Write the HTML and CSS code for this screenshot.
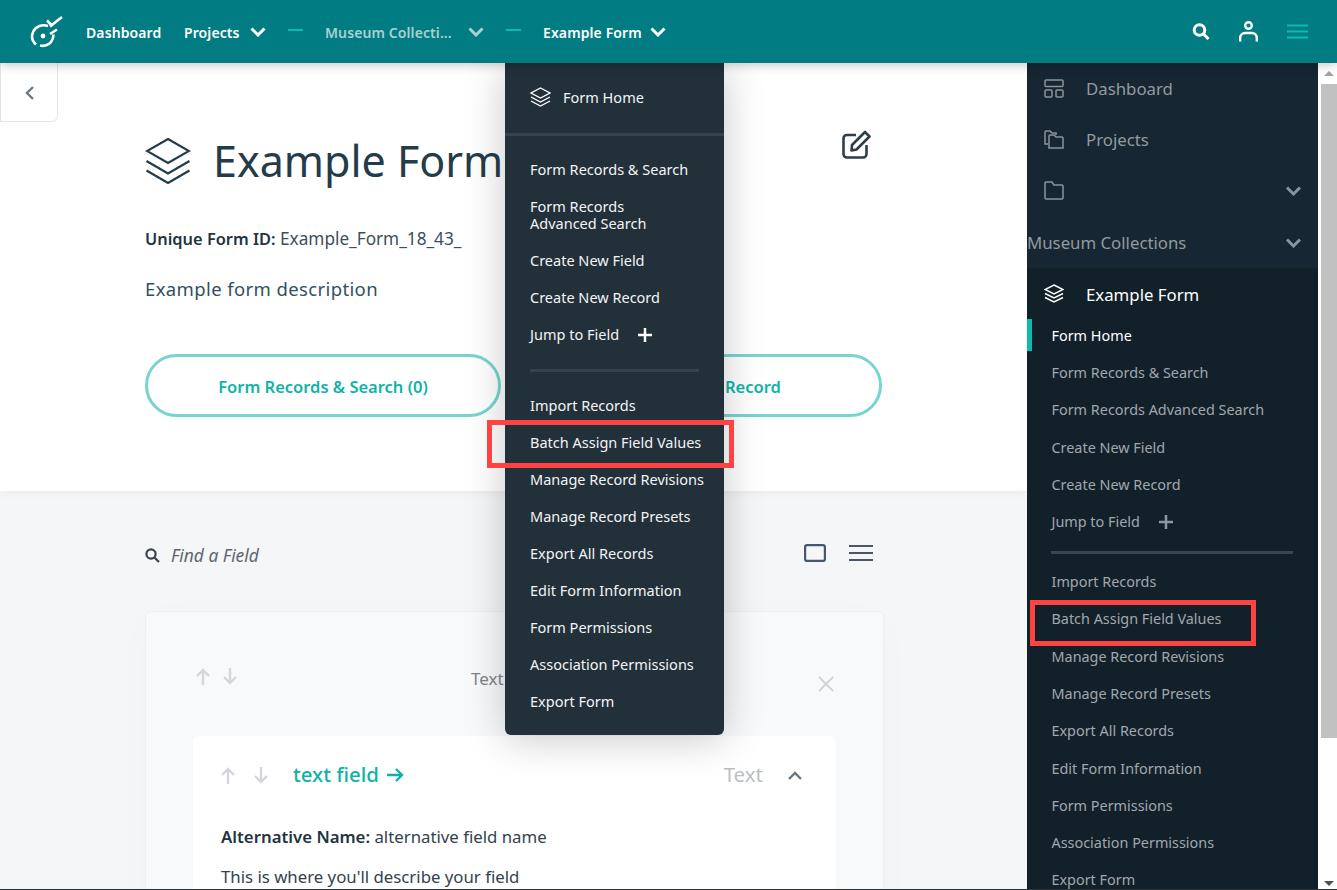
FILE: index.html
```html
<!doctype html>
<html lang="en">
<head>
	<meta charset="UTF-8" />
	<title>Example Form</title>
	<link rel="stylesheet" href="styles.css">
</head>
<body>
<div class="page">

<div class="topbar">
	<svg class="logo" width="34" height="32" viewBox="0 0 34 32" fill="none" stroke="#fff" stroke-width="2.6">
		<path d="M6 28.500 C2 25 1 20 3.500 15 C6 10.500 12 8 18 10"/>
		<path d="M10 29.500 C17 31 23 27 23.500 18.500"/>
		<path d="M17 4.500 L22.500 10"/>
		<path d="M20 10.500 L32 1"/>
		<path d="M20 18 L27 13.500"/>
		<circle cx="13" cy="20" r="2.400" fill="#fff" stroke="none"/>
	</svg>
	<a class="nav-link dash-link">Dashboard</a>
	<a class="nav-link projects-link">Projects</a>
	<svg class="chev" width="16" height="10" viewBox="0 0 16 10" fill="none" stroke="#fff" stroke-width="3"><path d="M1.500 1.500 L8 8 L14.500 1.500"/></svg>
	<span class="dash-sep"></span>
	<a class="nav-link muted museum-link">Museum Collecti...</a>
	<svg class="chev chev-muted" width="16" height="10" viewBox="0 0 16 10" fill="none" stroke="#a9d0d2" stroke-width="3"><path d="M1.500 1.500 L8 8 L14.500 1.500"/></svg>
	<span class="dash-sep"></span>
	<a class="nav-link form-link">Example Form</a>
	<svg class="chev" width="16" height="10" viewBox="0 0 16 10" fill="none" stroke="#fff" stroke-width="3"><path d="M1.500 1.500 L8 8 L14.500 1.500"/></svg>
	<div class="top-right">
		<svg width="18" height="17" viewBox="0 0 18 17" fill="none" stroke="#fff" stroke-width="3"><circle cx="7.500" cy="7" r="5.300"/><path d="M11.500 11 L16.500 16"/></svg>
		<svg width="19" height="21" viewBox="0 0 19 21" fill="none" stroke="#fff" stroke-width="2.400"><circle cx="9.500" cy="4.500" r="3.300"/><path d="M1.200 20.500 V17 C1.200 14 3.500 12 6 12 H13 C15.500 12 17.800 14 17.800 17 V20.500"/></svg>
		<svg width="21" height="15" viewBox="0 0 21 15" fill="none" stroke="#0dbcaf" stroke-width="2"><path d="M0 1.500 H21 M0 7.500 H21 M0 13.500 H21"/></svg>
	</div>
</div>

<div class="main">
	<div class="content">
		<div class="form-head">
			<div class="title-row">
				<div class="title">
					<svg width="46" height="48" viewBox="0 0 46 48" fill="none" stroke="#243c49" stroke-width="2.200"><path d="M23 2 L44 14 L23 26 L2 14 Z"/><path d="M1.500 24 L23 36.500 L44.500 24"/><path d="M1.500 33.500 L23 46 L44.500 33.500"/></svg>
					<h1>Example Form</h1>
				</div>
				<svg class="edit-icon" width="29" height="29" viewBox="0 0 29 29" fill="none" stroke="#2c3e4a" stroke-width="2.600" stroke-linejoin="round"><path d="M14 5 H5 C3 5 1.500 6.500 1.500 8.500 V24 C1.500 26 3 27.500 5 27.500 H21 C23 27.500 24.500 26 24.500 24 V15"/><path d="M10 15 L23 2 L27.500 6.500 L14.500 19.500 L9.500 20.500 Z"/></svg>
			</div>
			<p class="unique-id"><b>Unique Form ID:</b> Example_Form_18_43_</p>
			<p class="description">Example form description</p>
			<div class="big-buttons">
				<a class="big-btn">Form Records &amp; Search (0)</a>
				<a class="big-btn">Create New Record</a>
			</div>
		</div>

		<div class="form-body">
			<div class="toolbar">
				<div class="find">
					<svg width="15" height="15" viewBox="0 0 15 15" fill="none" stroke="#3c444b" stroke-width="2.200"><circle cx="6" cy="6" r="4.600"/><path d="M9.500 9.500 L14 14"/></svg>
					<span>Find a Field</span>
				</div>
				<div class="view-icons">
					<svg width="22" height="18" viewBox="0 0 22 18" fill="none" stroke="#46586a" stroke-width="2.200"><rect x="1.100" y="1.100" width="19.800" height="15.800" rx="2"/></svg>
					<svg width="24" height="18" viewBox="0 0 24 18" fill="none" stroke="#46586a" stroke-width="2"><path d="M0 2 H24 M0 9 H24 M0 16 H24"/></svg>
				</div>
			</div>

			<div class="group-card">
				<div class="group-head">
					<div class="arrows group-arrows">
						<svg width="14" height="17" viewBox="0 0 14 17" fill="none" stroke="#d3d7db" stroke-width="2.400"><path d="M7 17 V2 M1 8 L7 2 L13 8"/></svg>
						<svg width="14" height="17" viewBox="0 0 14 17" fill="none" stroke="#d3d7db" stroke-width="2.400"><path d="M7 0 V15 M1 9 L7 15 L13 9"/></svg>
					</div>
					<span class="group-label">Text</span>
					<svg class="group-x" width="16" height="16" viewBox="0 0 16 16" fill="none" stroke="#cfd3d7" stroke-width="1.800"><path d="M1 1 L15 15 M15 1 L1 15"/></svg>
				</div>
				<div class="field-card">
					<div class="field-head">
						<div class="arrows field-arrows">
							<svg width="14" height="17" viewBox="0 0 14 17" fill="none" stroke="#d3d7db" stroke-width="2.400"><path d="M7 17 V2 M1 8 L7 2 L13 8"/></svg>
							<svg width="14" height="17" viewBox="0 0 14 17" fill="none" stroke="#d3d7db" stroke-width="2.400"><path d="M7 0 V15 M1 9 L7 15 L13 9"/></svg>
						</div>
						<a class="field-name">text field</a>
						<svg width="17" height="14" viewBox="0 0 17 14" fill="none" stroke="#0db3a8" stroke-width="2.400"><path d="M0 7 H15 M9 1 L15 7 L9 13"/></svg>
						<span class="field-type">Text</span>
						<svg class="field-toggle" width="14" height="9" viewBox="0 0 14 9" fill="none" stroke="#6b7780" stroke-width="2.400"><path d="M1 8 L7 2 L13 8"/></svg>
					</div>
					<p class="field-line"><b>Alternative Name:</b> alternative field name</p>
					<p class="field-line">This is where you'll describe your field</p>
				</div>
			</div>
		</div>
	</div>

	<div class="sidenav">
		<div class="side-top">
			<div class="side-row">
				<svg class="side-icon" width="20" height="19" viewBox="0 0 20 19" fill="none" stroke="#8b949b" stroke-width="1.500"><rect x="1" y="1" width="18" height="6.500" rx="1"/><rect x="1" y="11" width="7" height="7" rx="1"/><rect x="12" y="11" width="7" height="7" rx="1"/></svg>
				<span>Dashboard</span>
			</div>
			<div class="side-row">
				<svg class="side-icon" width="20" height="19" viewBox="0 0 20 19" fill="none" stroke="#8b949b" stroke-width="1.500"><path d="M4 14 H1 V2 C1 1.500 1.500 1 2 1 H6 L8 3 H12 V5"/><path d="M5 18 V6 C5 5.500 5.500 5 6 5 H10 L12 7 H18 C18.500 7 19 7.500 19 8 V18 Z"/></svg>
				<span>Projects</span>
			</div>
			<div class="side-row">
				<svg class="side-icon" width="20" height="19" viewBox="0 0 20 19" fill="none" stroke="#8b949b" stroke-width="1.500"><path d="M1 2 C1 1.500 1.500 1 2 1 H8 L10 4 H18 C18.800 4 19 4.500 19 5 V17 C19 17.500 18.800 18 18 18 H2 C1.500 18 1 17.500 1 17 Z"/></svg>
				<span class="side-grow"></span>
				<svg class="side-chev" width="15" height="10" viewBox="0 0 15 10" fill="none" stroke="#8b949b" stroke-width="3"><path d="M1 1.500 L7.500 8 L14 1.500"/></svg>
			</div>
			<div class="side-row side-row-flush">
				<span>Museum Collections</span>
				<span class="side-grow"></span>
				<svg class="side-chev" width="15" height="10" viewBox="0 0 15 10" fill="none" stroke="#8b949b" stroke-width="3"><path d="M1 1.500 L7.500 8 L14 1.500"/></svg>
			</div>
		</div>
		<div class="side-form">
			<div class="side-row side-row-active">
				<svg class="side-icon" width="20" height="19" viewBox="0 0 20 19" fill="none" stroke="#fff" stroke-width="1.400"><path d="M10 1 L19 5.500 L10 10 L1 5.500 Z"/><path d="M1 9.500 L10 14 L19 9.500"/><path d="M1 13.500 L10 18 L19 13.500"/></svg>
				<span>Example Form</span>
			</div>
			<ul class="side-list">
				<li class="side-current">Form Home</li>
				<li>Form Records &amp; Search</li>
				<li>Form Records Advanced Search</li>
				<li>Create New Field</li>
				<li>Create New Record</li>
				<li class="side-jump">Jump to Field
					<svg width="14" height="14" viewBox="0 0 14 14" fill="none" stroke="#8d979e" stroke-width="2.500"><path d="M7 0 V14 M0 7 H14"/></svg>
				</li>
				<li class="side-divider"></li>
				<li>Import Records</li>
				<li>Batch Assign Field Values</li>
				<li>Manage Record Revisions</li>
				<li>Manage Record Presets</li>
				<li>Export All Records</li>
				<li>Edit Form Information</li>
				<li>Form Permissions</li>
				<li>Association Permissions</li>
				<li>Export Form</li>
			</ul>
		</div>
	</div>

	<div class="scrollbar">
		<span class="scroll-up"></span>
		<span class="scroll-thumb"></span>
		<span class="scroll-down"></span>
	</div>
</div>

<a class="back-tab">
	<svg width="10" height="14" viewBox="0 0 10 14" fill="none" stroke="#6f7880" stroke-width="2.400"><path d="M8 1 L2 7 L8 13"/></svg>
</a>

<div class="dropdown">
	<div class="drop-home">
		<svg width="21" height="20" viewBox="0 0 21 20" fill="none" stroke="#fff" stroke-width="1.400"><path d="M10.500 1 L20 6 L10.500 11 L1 6 Z"/><path d="M1 10 L10.500 15 L20 10"/><path d="M1 14 L10.500 19 L20 14"/></svg>
		<span>Form Home</span>
	</div>
	<ul class="drop-list">
		<li>Form Records &amp; Search</li>
		<li>Form Records<br>Advanced Search</li>
		<li>Create New Field</li>
		<li>Create New Record</li>
		<li class="drop-jump">Jump to Field
			<svg width="14" height="14" viewBox="0 0 14 14" fill="none" stroke="#fff" stroke-width="2.500"><path d="M7 0 V14 M0 7 H14"/></svg>
		</li>
		<li class="drop-divider"></li>
		<li>Import Records</li>
		<li>Batch Assign Field Values</li>
		<li>Manage Record Revisions</li>
		<li>Manage Record Presets</li>
		<li>Export All Records</li>
		<li>Edit Form Information</li>
		<li>Form Permissions</li>
		<li>Association Permissions</li>
		<li>Export Form</li>
	</ul>
</div>

<span class="mark mark-drop"></span>
<span class="mark mark-side"></span>

</div>
</body>
</html>
```

FILE: styles.css
```css
*{box-sizing: border-box;}
html, body{
	margin: 0;
	padding: 0;
	height: 100%;
	overflow: hidden;
}
body{
	font-family: "Noto Sans", "Open Sans", sans-serif;
	font-size: 15px;
	color: #22343f;
}
p{margin: 0;}
ul{margin: 0; padding: 0; list-style: none;}

.page{
	position: relative;
	width: 1337px;
	height: 890px;
	display: flex;
	flex-direction: column;
	overflow: hidden;
	border-bottom: 1px solid #2a3238;
}

/* top bar */
.topbar{
	position: relative;
	z-index: 3;
	height: 63px;
	flex: none;
	display: flex;
	align-items: center;
	padding-left: 30px;
	background: #007c82;
	box-shadow: 0 2px 10px rgba(0, 0, 0, 0.22);
}
.logo{flex: none;}
.nav-link{
	padding-top: 2px;
	color: #fff;
	font-size: 14px;
	font-weight: 600;
	letter-spacing: 0.1px;
	white-space: nowrap;
}
.dash-link{margin-left: 22px; width: 98px;}
.projects-link{width: 66px;}
.museum-link{width: 143px;}
.form-link{width: 107px;}
.muted{color: #a9d0d2;}
.chev{flex: none;}
.dash-sep{
	flex: none;
	width: 15px;
	height: 2px;
	margin: 0 22px;
	margin-bottom: 4px;
	background: #0dbcaf;
}
.top-right{
	margin-left: auto;
	margin-right: 29px;
	display: flex;
	align-items: center;
	gap: 29px;
}

/* main row */
.main{
	flex: 1;
	min-height: 0;
	display: flex;
}
.content{
	width: 1027px;
	flex: none;
	overflow: hidden;
	background: #f4f6f8;
}
.form-head{
	height: 428px;
	padding: 68px 0 0 145px;
	background: #fff;
	box-shadow: 0 2px 8px rgba(0, 0, 0, 0.05);
}
.title-row{
	width: 726px;
	height: 60px;
	display: flex;
	align-items: center;
	justify-content: space-between;
}
.title{
	display: flex;
	align-items: center;
	gap: 22px;
}
h1{
	margin: 0;
	font-size: 43px;
	font-weight: 400;
	line-height: 60px;
	color: #243c49;
}
.edit-icon{margin-bottom: 34px;}
.unique-id{
	margin-top: 36px;
	font-size: 17.200px;
	color: #3d4f5a;
}
.unique-id b{
	font-size: 16.400px;
	font-weight: 600;
	color: #22343f;
}
.description{
	margin-top: 26px;
	font-size: 18.500px;
	letter-spacing: 0.38px;
	color: #33505f;
}
.big-buttons{
	margin-top: 53px;
	display: flex;
	gap: 25px;
}
.big-btn{
	width: 356px;
	height: 63px;
	padding-top: 1px;
	display: flex;
	align-items: center;
	justify-content: center;
	border: 3px solid #76d5cf;
	border-radius: 32px;
	color: #10b3a8;
	font-size: 16.500px;
	font-weight: 600;
}
.form-body{
	padding: 0 0 0 145px;
}
.toolbar{
	width: 728px;
	height: 120px;
	padding-top: 52px;
	display: flex;
	justify-content: space-between;
	align-items: flex-start;
}
.find{
	display: flex;
	align-items: center;
	gap: 11px;
	font-size: 17.400px;
	font-style: italic;
	color: #5d666e;
}
.view-icons{
	margin-top: 1px;
	display: flex;
	align-items: center;
	gap: 23px;
}
.group-card{
	width: 739px;
	height: 400px;
	padding: 0 47px;
	background: #f8f9fb;
	border: 1px solid #eeeff1;
	border-radius: 6px;
	box-shadow: 0 8px 40px rgba(0, 0, 0, 0.02);
}
.group-head{
	position: relative;
	height: 124px;
	display: flex;
	align-items: flex-start;
	padding-top: 56px;
}
.arrows{
	display: flex;
	flex: none;
}
.group-arrows{gap: 13px; margin-left: 3px;}
.group-label{
	margin-left: 234px;
	font-size: 17px;
	color: #7c848a;
	line-height: 22px;
}
.group-x{
	margin-left: auto;
	margin-right: 2px;
	margin-top: 8px;
}
.field-card{
	height: 300px;
	padding: 28px 28px 0;
	background: #fff;
	border-radius: 6px;
}
.field-head{
	display: flex;
	align-items: center;
	height: 22px;
	margin-bottom: 39px;
}
.field-arrows{gap: 19px;}
.field-name{
	margin: -2px 8px 0 25px;
	color: #0db3a8;
	font-size: 20.400px;
	font-weight: 500;
}
.field-type{
	margin: -2px 0 0 auto;
	font-size: 20.500px;
	color: #b9c0c5;
}
.field-toggle{margin: 0 6px 0 25px;}
.field-line{
	font-size: 16.800px;
	margin-bottom: 17px;
	color: #33434e;
}
.field-line b{font-weight: 600; color: #22343f;}

/* side navigation */
.sidenav{
	width: 291px;
	flex: none;
	overflow: hidden;
	background: #162632;
	color: #929a9f;
	font-size: 16.800px;
}
.side-top{
	height: 205px;
}
.side-row{
	height: 51px;
	padding: 0 17px;
	display: flex;
	align-items: center;
}
.side-row-flush{padding: 3px 17px 0 0; height: 50px; white-space: nowrap;}
.side-icon{
	flex: none;
	margin-right: 22px;
}
.side-grow{flex: 1;}
.side-chev{flex: none;}
.side-form{
	background: #12202a;
}
.side-row-active{
	color: #fff;
	height: 51px;
	padding-top: 2px;
}
.side-row-active .side-icon{margin-top: -2px;}
.side-list{
	padding-top: 0;
	font-size: 14.400px;
}
.side-list li{
	height: 37.300px;
	line-height: 37.300px;
	padding-left: 24.500px;
	white-space: nowrap;
	color: #a0a8ad;
}
.side-list .side-current{
	color: #fff;
	border-left: 5px solid #0dbcaf;
	padding-left: 19.500px;
	height: 32px;
	line-height: 33px;
	margin: 0 0 3px;
}
.side-list .side-jump{
	display: flex;
	align-items: center;
	gap: 19px;
}
.side-list .side-divider{
	height: 3px;
	margin: 11px 25px 8.600px 24px;
	padding: 0;
	background: #39464f;
}

.scrollbar{
	flex: 1;
	position: relative;
	background: #fff;
	padding-left: 3px;
}
.scroll-thumb{
	position: absolute;
	top: 21px;
	left: 3px;
	right: 0;
	height: 654px;
	background: #c1c1c1;
}
.scroll-up, .scroll-down{
	position: absolute;
	left: 6px;
	width: 0;
	height: 0;
	border-left: 5px solid transparent;
	border-right: 5px solid transparent;
}
.scroll-up{
	top: 8px;
	border-bottom: 5px solid #a3a3a3;
}
.scroll-down{
	bottom: 3px;
	border-top: 5px solid #505050;
}

/* overlays */
.back-tab{
	position: absolute;
	top: 63px;
	left: 0;
	width: 58px;
	height: 59px;
	padding: 1px 0 0 2px;
	display: flex;
	align-items: center;
	justify-content: center;
	background: #fff;
	border: 1px solid #e6e6e6;
	border-top: 0;
	border-radius: 0 0 6px 0;
}
.dropdown{
	position: absolute;
	z-index: 2;
	top: 63px;
	left: 505px;
	width: 219px;
	height: 672px;
	background: #22303a;
	border-radius: 0 0 6px 6px;
	box-shadow: 0 4px 40px rgba(0, 0, 0, 0.22);
	color: #f3f4f5;
	font-size: 14.500px;
}
.drop-home{
	height: 73px;
	padding: 0 0 3px 25px;
	display: flex;
	align-items: center;
	gap: 12px;
	border-bottom: 3px solid #33424c;
}
.drop-list{
	padding-top: 25px;
}
.drop-list li{
	padding: 0 0 0 25px;
	margin-bottom: 20px;
	line-height: 17px;
	white-space: nowrap;
}
.drop-list .drop-jump{
	display: flex;
	align-items: center;
	gap: 19px;
	margin-bottom: 26px;
}
.drop-list .drop-divider{
	height: 3px;
	margin: 0 25px 25px;
	padding: 0;
	background: #33424c;
}
.mark{
	position: absolute;
	z-index: 4;
	border: 5px solid #ff4343;
}
.mark-drop{
	top: 420px;
	left: 487px;
	width: 247px;
	height: 48px;
}
.mark-side{
	top: 600px;
	left: 1030px;
	width: 226px;
	height: 46px;
}
```
